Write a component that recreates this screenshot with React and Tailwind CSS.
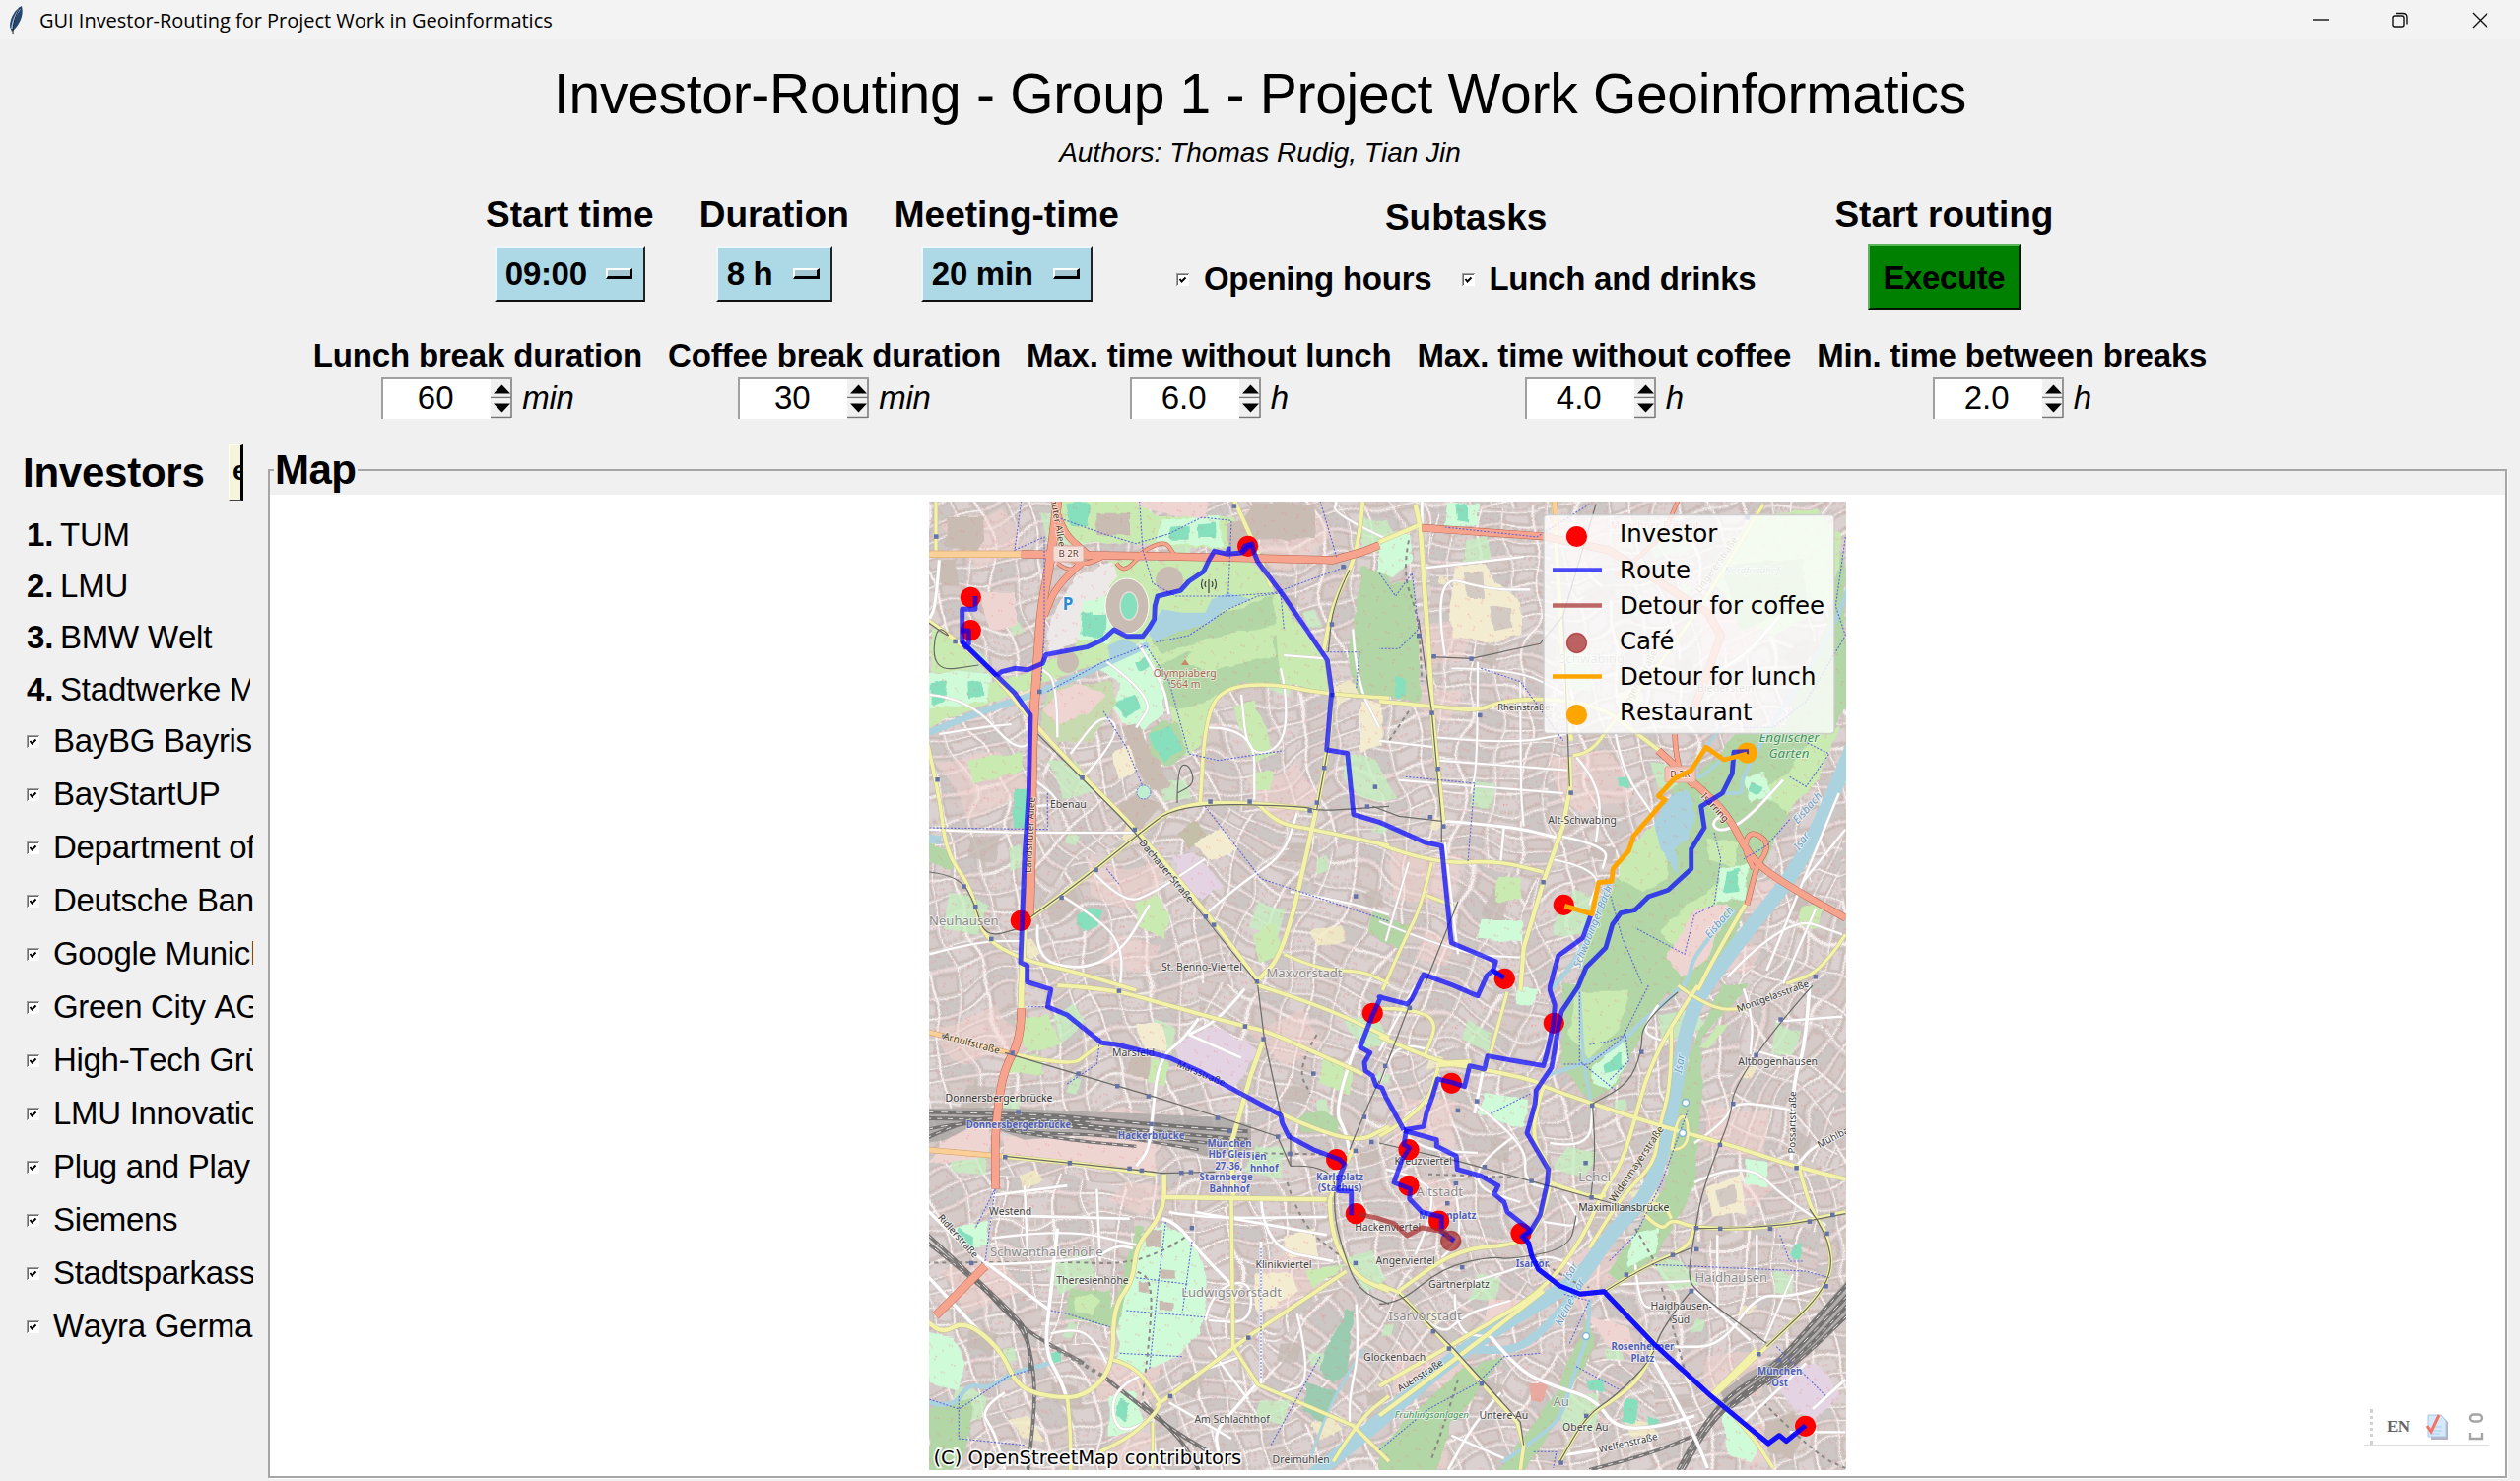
import React from "react";

/* ---------- window chrome ---------- */

function TitleBar() {
  return (
    <div className="flex h-[40px] w-full items-center bg-[#f3f3f3]">
      <svg className="ml-[8px] h-[30px] w-[17px] shrink-0" viewBox="0 0 17 30">
        <path d="M14 1C8 4 2 12 2 22l2 5C10 22 17 12 14 1Z" fill="#27466f" />
        <path d="M12 4C8 9 5 15 4 24" stroke="#8fb4dc" strokeWidth="2" fill="none" />
        <path d="M12 3C8 10 5 18 5 29" stroke="#222" strokeWidth="1" fill="none" />
      </svg>
      <span className="ml-[15px] mt-[2px] whitespace-nowrap font-['Open_Sans','Noto_Sans',sans-serif] text-[20px] leading-[38px] tracking-[-0.02px] text-black">
        GUI Investor-Routing for Project Work in Geoinformatics
      </span>
      <svg className="ml-auto mr-[31px] h-[20px] w-[180px]" viewBox="0 0 180 20" fill="none" stroke="#111" strokeWidth="1.4">
        <path d="M1 10h16" />
        <rect x="82" y="6" width="11" height="11" rx="2" />
        <path d="M85 3.5h7q4 0 4 4v7" />
        <path d="M163 3l15 15M178 3l-15 15" />
      </svg>
    </div>
  );
}

/* ---------- small widgets ---------- */

function CheckBox() {
  return (
    <svg className="h-[13px] w-[13px] shrink-0" viewBox="0 0 13 13">
      <rect width="13" height="13" fill="#fff" />
      <path d="M0 13V0h13v1H1v12z" fill="#a0a0a0" />
      <path d="M1 12V1h11v1H2v10z" fill="#696969" />
      <path d="M3.5 6l2 2.5 4-4" stroke="#000" strokeWidth="2" fill="none" />
    </svg>
  );
}

function OptionMenu({ label, width }) {
  return (
    <div
      className={`flex h-[56px] items-center justify-between border-2 border-t-[#eef8fb] border-l-[#eef8fb] border-r-[#222] border-b-[#111] bg-[#add8e6] pl-[9px] pr-[11px] ${width}`}
    >
      <span className="whitespace-pre text-[33px] font-bold leading-[54px] tracking-[-0.3px]">{label}</span>
      <span className="mt-[-1px] h-[11px] w-[27px] border-t-2 border-l-2 border-r-[3px] border-b-[3px] border-t-white border-l-white border-r-black border-b-black bg-[#a3c8d4]" />
    </div>
  );
}

function Setting({ title, children }) {
  return (
    <div className="flex flex-col items-center">
      <div className="whitespace-nowrap text-[37px] font-bold leading-[42px]">{title}</div>
      {children}
    </div>
  );
}

function Spin({ title, value, unit }) {
  return (
    <div className="flex flex-col items-center">
      <div className="whitespace-nowrap text-[33px] font-bold leading-[38px] tracking-[-0.15px]">{title}</div>
      <div className="mt-[3px] flex h-[42px] items-center">
        <div className="flex h-[42px] w-[133px] border-l-2 border-t-2 border-[#a0a0a0] bg-white">
          <div className="flex-1 pr-[3px] text-center text-[33px] leading-[38px]">{value}</div>
          <svg className="h-[40px] w-[22px]" viewBox="0 0 22 40">
            <rect width="22" height="39" fill="#f0f0f0" />
            <path d="M3 14.500L11.500 5.500L20 14.500Z" fill="#000" />
            <path d="M3 24.500L11.500 33.500L20 24.500Z" fill="#000" />
            <path d="M0 18.500h21M0 38.500h21M21 0v39" stroke="#777" strokeWidth="1.500" />
            <path d="M0 20h20" stroke="#fff" />
          </svg>
        </div>
        <span className="ml-[10px] text-[33px] italic leading-[40px] tracking-[-0.3px]">{unit}</span>
      </div>
    </div>
  );
}

/* ---------- map geometry ----------
   The drawing is authored on four sheets at three times the display scale. */

const ORIGIN = { 1: [940, 505], 2: [1400, 505], 3: [940, 1000], 4: [1400, 1000] };

function pts(sheet, s) {
  const [ox, oy] = ORIGIN[sheet];
  return s
    .trim()
    .split(/\s+/)
    .map((p) => {
      const [x, y] = p.split(",").map(Number);
      return [ox + x / 3, oy + y / 3];
    });
}

function line(...parts) {
  const all = [];
  for (let i = 0; i < parts.length; i += 2) all.push(...pts(parts[i], parts[i + 1]));
  return "M" + all.map((p) => p[0].toFixed(1) + " " + p[1].toFixed(1)).join("L");
}

/* rounds the corners of a polyline */
function curve(...parts) {
  const all = [];
  for (let i = 0; i < parts.length; i += 2) all.push(...pts(parts[i], parts[i + 1]));
  if (all.length < 3) return line(...parts);
  let d = `M${all[0][0]} ${all[0][1]}`;
  for (let i = 1; i < all.length - 1; i++) {
    const mx = (all[i][0] + all[i + 1][0]) / 2;
    const my = (all[i][1] + all[i + 1][1]) / 2;
    d += `Q${all[i][0].toFixed(1)} ${all[i][1].toFixed(1)} ${mx.toFixed(1)} ${my.toFixed(1)}`;
  }
  const e = all[all.length - 1];
  return d + `L${e[0]} ${e[1]}`;
}

const FABRIC = [
  ["url(#g20)", line(1, "850,930 1180,960 1140,1500 1000,1480 640,1030")],
  ["url(#g20)", line(2, "-180,1080 180,1110 480,1160 330,1500 -300,1500")],
  ["url(#g20)", line(3, "830,0 1400,0 1400,420 1280,480 1000,380")],
  ["url(#g20)", line(4, "0,0 500,0 500,240 0,200")],
  ["url(#g5)", line(2, "130,20 500,20 560,800 480,1160 200,1110")],
  ["url(#g0)", line(3, "200,600 640,620 620,880 560,1100 380,1060 200,860")],
  ["url(#g0)", line(3, "740,660 1220,660 1290,870 940,1100 850,1000 850,850")],
  ["url(#g0)", line(4, "980,760 1350,740 1370,920 1170,1100 960,940")],
  ["url(#g60)", line(2, "1100,1500 1420,1000 1420,1500")],
  ["url(#g60)", line(4, "1100,0 1420,0 1420,560 1060,480")],
  ["url(#g45)", line(1, "340,700 620,1000 300,1260")],
  ["url(#g45)", line(3, "940,1120 1300,900 1410,1000 1410,1200 1250,1400 1010,1210")],
  ["url(#g45)", line(4, "0,900 400,850 500,960 100,1160 0,1240")],
  ["url(#g45)", line(4, "350,1100 830,1180 820,1340 420,1320")],
];

const G1 = "#c9ebb2";
const G2 = "#b3d6a6";
const SPORT = "#d0fbd9";
const PITCH = "#86dfbd";
const BLDG = "#c9bcb3";
const WATER = "#aad3df";
const PINK = "#efd5d2";
const LILAC = "#e4d3e3";
const CREAM = "#f4ecd0";

const AREAS = [
  [G1, line(1, "400,10 640,10 700,60 930,60 1000,160 700,140 450,130 400,60")],
  [G1, line(1, "560,195 980,190 1060,280 1210,500 1230,590 1080,560 960,560 870,620 830,760 790,780 720,560 660,480 540,500 350,560 0,700 0,620 300,540 460,460")],
  [G2, line(1, "700,520 800,470 960,460 1080,420 1130,470 1080,560 960,560 850,620 760,640 700,600")],
  [G2, line(1, "800,380 960,340 1060,300 1100,370 960,410 850,430 720,470 690,440")],
  [G1, line(1, "830,450 950,410 1050,420 1060,480 960,500 860,530 790,500")],
  [G1, line(1, "1060,300 1230,510 1210,560 1080,545")],
  [G2, line(1, "1330,210 1410,230 1410,600 1320,600 1290,480")],
  [G1, line(1, "20,400 130,470 130,520 20,530")],
  [SPORT, line(1, "10,540 90,530 200,540 180,620 10,640")],
  [PITCH, line(1, "20,570 60,560 50,620 20,630")],
  [PITCH, line(1, "130,565 170,560 172,600 132,610")],
  ["#eee9e9", line(1, "460,240 560,200 580,240 540,300 500,400 460,440 370,470 385,360")],
  [SPORT, line(1, "480,320 560,300 560,440 470,430")],
  [PITCH, line(1, "480,350 500,350 500,420 475,410")],
  [PITCH, line(1, "505,360 545,360 540,425 500,420")],
  [PITCH, line(1, "430,20 495,20 490,85 440,80")],
  [BLDG, line(1, "520,50 615,50 615,115 520,115")],
  [SPORT, line(1, "720,70 890,60 900,150 700,130")],
  [PITCH, line(1, "750,95 800,90 800,125 745,125")],
  [PITCH, line(1, "830,85 880,80 880,120 832,120")],
  [BLDG, line(1, "1000,20 1180,20 1185,120 1000,125 975,60")],
  [BLDG, line(1, "40,200 90,190 95,260 45,260")],
  [BLDG, line(1, "70,60 170,60 175,130 150,160 60,150")],
  [BLDG, line(1, "920,80 975,75 985,160 925,165")],
  [PINK, line(1, "640,10 860,10 850,60 760,50 660,30")],
  [PINK, line(1, "170,290 270,290 270,390 200,400 180,350")],
  [SPORT, line(1, "530,520 660,440 720,560 720,660 640,720 570,640 600,570")],
  [PITCH, line(1, "640,500 675,480 680,510 650,525")],
  [PITCH, line(1, "575,625 635,600 650,640 610,665")],
  ["#c8dbb0", line(1, "370,580 560,560 580,620 500,740 400,740 350,690")],
  [PINK, line(1, "400,590 470,570 540,600 500,650 400,690 360,650")],
  [BLDG, line(1, "600,700 640,690 700,800 740,880 690,890 640,800")],
  [BLDG, line(1, "585,940 640,905 715,930 650,1010 590,960")],
  [G2, line(1, "680,720 720,680 770,690 790,770 760,810 720,810 690,780")],
  [PITCH, line(1, "682,725 745,695 775,770 722,800")],
  [G1, line(1, "940,640 1000,620 1060,780 1000,800")],
  [G1, line(1, "130,800 290,780 290,830 150,870")],
  [PITCH, line(1, "270,890 310,890 300,1000 270,1000")],
  [G2, line(1, "10,1060 70,1080 80,1130 10,1110")],
  [WATER, line(1, "10,1030 45,1030 45,1055 10,1055")],
  [LILAC, line(1, "750,1100 810,1080 900,1180 840,1225 790,1190")],
  [PITCH, line(1, "465,1270 500,1250 535,1260 520,1300 480,1318 460,1300")],
  [G1, line(1, "640,1240 700,1210 740,1270 720,1340 650,1300")],
  [G1, line(1, "1000,1330 1060,1300 1080,1390 1010,1410")],
  [G2, line(1, "1360,1260 1410,1270 1410,1360 1350,1320")],
  [G1, line(1, "1000,840 1050,835 1050,890 1000,890")],
  ["#c4bfa9", line(1, "770,1020 820,990 850,1030 800,1060")],
  [CREAM, line(1, "820,1050 900,1010 950,1070 870,1100")],
  [CREAM, line(1, "1330,620 1385,630 1385,750 1325,770")],
  [CREAM, line(1, "570,780 620,760 640,830 590,860")],
  [SPORT, line(2, "0,130 90,110 100,190 40,240 0,220")],
  [G2, line(2, "0,270 100,260 120,480 120,620 20,600 0,560")],
  [CREAM, line(2, "235,210 325,205 350,265 430,315 430,410 340,440 230,420 215,330")],
  ["#d3cac4", line(2, "265,230 310,230 315,300 270,300")],
  ["#d3cac4", line(2, "340,330 400,340 400,390 350,400")],
  [PITCH, line(2, "50,550 80,555 80,600 52,605")],
  [SPORT, line(2, "210,20 300,20 300,80 200,90")],
  [PITCH, line(2, "235,25 270,20 270,75 240,70")],
  [G1, line(2, "360,1160 430,1165 425,1225 355,1225")],
  [SPORT, line(2, "310,1290 430,1290 430,1350 300,1340")],
  [G2, line(2, "0,1280 90,1310 60,1370 0,1350")],
  [G1, line(2, "1130,60 1330,40 1400,110 1400,300 1200,420 1100,360 1020,250")],
  [G2, line(2, "1050,210 1290,190 1300,330 1100,400")],
  [G2, line(2, "1410,170 1425,620 1200,1040 1010,1500 600,1500 640,1340 720,1170 860,980 900,880 1040,790 1090,720 1240,700 1360,400")],
  [G1, line(2, "1170,890 1250,840 1310,740 1400,700 1330,860 1240,960")],
  [G1, line(2, "740,1090 860,980 880,1160 800,1200 730,1160")],
  [G1, line(2, "940,1240 1030,1180 1020,1320 920,1380 860,1320")],
  [G1, line(2, "1000,1040 1090,1050 1080,1120 1010,1100")],
  [WATER, line(2, "840,990 890,910 940,890 960,960 940,1040 900,1070 905,1140 860,1070")],
  [SPORT, line(2, "1040,1130 1120,1120 1110,1220 1030,1230")],
  [PITCH, line(2, "1062,1140 1095,1130 1090,1200 1050,1205")],
  [SPORT, line(2, "1110,850 1170,840 1190,910 1130,920")],
  [PITCH, line(2, "1135,870 1165,885 1150,905 1125,895")],
  [PINK, line(2, "880,1400 960,1260 1060,1240 1000,1400 920,1460")],
  [G1, line(2, "1290,1250 1350,1240 1330,1310 1280,1300")],
  [PITCH, line(2, "730,855 755,850 755,880 733,880")],
  [G1, line(3, "270,110 370,90 400,180 310,200")],
  [G1, line(3, "250,220 350,220 350,270 250,260")],
  [PINK, line(3, "10,540 190,520 190,380 120,400")],
  [PINK, line(3, "240,460 700,480 700,570 240,520")],
  [BLDG, line(3, "620,220 680,215 680,280 615,270")],
  [G1, line(3, "690,230 735,235 725,300 680,290")],
  [LILAC, line(3, "750,180 880,130 960,170 1010,200 920,330 800,260")],
  [G2, line(3, "1140,400 1200,385 1260,410 1250,450 1150,440")],
  [G1, line(3, "1210,220 1300,250 1290,330 1200,290")],
  [SPORT, line(3, "660,760 720,725 800,770 845,850 850,950 830,1060 760,1130 660,1175 590,1130 590,980 610,880")],
  [BLDG, line(3, "670,750 710,740 715,790 672,795")],
  [BLDG, line(3, "715,865 755,868 755,890 715,890")],
  [BLDG, line(3, "710,965 752,970 750,985 710,985")],
  [BLDG, line(3, "650,900 680,905 680,935 650,930")],
  [G2, line(3, "640,740 660,740 625,860 600,960 575,1060 565,1000 600,900")],
  [G2, line(3, "440,925 560,930 570,1040 430,1010")],
  [G1, line(3, "455,955 500,940 530,965 500,1000 460,990")],
  [SPORT, line(3, "10,1060 80,1070 120,1150 90,1230 10,1210")],
  [G2, line(3, "10,1290 140,1260 130,1350 100,1475 10,1475")],
  [SPORT, line(3, "90,740 180,720 190,790 130,800")],
  [PITCH, line(3, "100,740 140,770 140,795 95,760")],
  [SPORT, line(3, "560,1250 640,1240 660,1350 560,1370")],
  [PITCH, line(3, "590,1260 620,1270 600,1330 580,1310")],
  [PITCH, line(3, "380,1120 410,1105 405,1140 385,1150")],
  ["#9bcbb0", line(3, "1285,985 1300,990 1280,1180 1240,1210 1205,1170 1230,1080")],
  ["#9bcbb0", line(3, "1165,1210 1250,1240 1210,1330 1150,1290")],
  [CREAM, line(3, "1090,770 1180,740 1190,830 1100,820")],
  [CREAM, line(3, "1000,880 1110,880 1130,930 1010,1000")],
  [CREAM, line(3, "640,120 720,120 730,200 670,190")],
  [G1, line(3, "1160,870 1270,850 1180,920")],
  [G2, line(4, "560,0 880,0 820,110 720,300 640,350 560,240")],
  [G1, line(4, "600,20 760,20 730,130 640,220 580,150")],
  [SPORT, line(4, "650,250 740,170 760,230 700,310 655,300")],
  [PITCH, line(4, "685,240 740,210 740,250 690,265")],
  [G2, line(4, "1050,0 1120,0 980,160 980,330 960,600 900,720 840,820 740,900 700,880 880,600 900,380 960,180")],
  [G1, line(4, "1060,120 1000,190 985,180 1030,130")],
  [SPORT, line(4, "320,330 450,350 440,430 310,390")],
  [SPORT, line(4, "770,760 850,740 840,810 760,860")],
  [SPORT, line(4, "425,10 480,15 460,60 420,50")],
  [G2, line(4, "0,1475 0,1410 240,1180 380,1130 220,1330 170,1475")],
  [G2, line(4, "540,1240 600,1100 640,1010 650,1110 570,1240 520,1360 440,1475 370,1475")],
  [SPORT, line(4, "1120,530 1180,540 1180,610 1120,600")],
  [CREAM, line(4, "1000,620 1100,580 1110,690 1015,700")],
  ["#d3cac4", line(4, "1030,630 1080,615 1085,660 1040,670")],
  [PITCH, line(4, "1260,790 1285,790 1275,830 1255,825")],
  [PITCH, line(4, "640,1210 680,1200 680,1235 645,1230")],
  [PITCH, line(4, "755,1260 785,1270 780,1330 740,1330")],
  [PITCH, line(4, "820,1310 850,1320 845,1345 815,1335")],
  [PITCH, line(4, "1290,1240 1315,1245 1300,1270 1280,1265")],
  [PINK, line(4, "640,1010 760,1040 780,1130 700,1100")],
  [PINK, line(4, "330,960 440,960 430,1020 330,1050")],
  [LILAC, line(4, "1200,1180 1330,1150 1400,1240 1320,1330 1240,1260")],
  [BLDG, line(4, "1180,1340 1260,1300 1290,1370 1260,1440 1190,1420")],
  ["#e8a9a0", line(4, "460,1215 510,1215 500,1260 465,1260")],
  [SPORT, line(4, "1050,1290 1090,1310 1160,1400 1130,1450 1060,1420")],
];

const RIVERS = [
  [44, curve(2, "1440,760 1360,960 1260,1150 1120,1320 1000,1480", 4, "960,60 920,200 880,450 820,640 700,760 620,880 520,950 380,1030 200,1150 0,1330 -200,1490")],
  [24, curve(4, "780,660 690,800 620,900 540,1010 430,1110 300,1110")],
  [12, curve(2, "1425,280 1390,400 1200,680 1100,860 1110,900 1060,900")],
  [13, curve(2, "1080,1260 960,1380 940,1480 900,1500", 4, "900,30 820,90 720,190 620,240 520,270")],
  [10, curve(4, "610,20 620,230 640,330 650,370")],
  [12, curve(4, "640,960 640,1060 600,1160 560,1300 520,1350 380,1450")],
  [20, curve(1, "0,720 140,660 330,600 470,540 670,450")],
  [14, curve(2, "700,1170 660,1300 590,1420 530,1490")],
  [10, curve(2, "1040,700 970,790 960,870 1050,790")],
  [8, curve(3, "1330,1110 1260,1220 1210,1330 1170,1440")],
  [14, curve(3, "10,1270 80,1290 130,1210 190,1230 260,1180 380,1150")],
];

const LAKES = [
  line(1, "685,390 720,340 780,350 850,350 870,310 920,290 990,310 900,345 870,380 760,410 700,440 680,420"),
  line(1, "555,450 600,430 640,445 640,465 560,490"),
];

const DASHES = [
  line(1, "290,10 270,160 360,120 360,420 350,560"),
  line(1, "650,10 660,160 690,260 760,300 920,300 1060,290 1280,210"),
  line(1, "370,590 540,500 670,450 740,560 800,780 890,800 1090,770"),
  line(1, "400,60 540,110 640,140 740,110 840,60 930,70 920,300"),
  line(1, "700,440 800,420 920,340 1010,300 1080,290 1090,400"),
  line(1, "540,650 610,760 660,880"),
  line(1, "10,1005 370,1010 370,900"),
  line(1, "850,940 1020,1160 1410,1290"),
  line(1, "550,1130 590,1180"),
  line(1, "1200,10 1250,180"),
  line(1, "1310,580 1320,470 1210,470"),
  line(2, "0,230 50,300 100,230 120,400 60,460 0,460"),
  line(2, "200,90 480,120 640,20"),
  line(2, "310,520 430,560 560,740"),
  line(2, "80,850 290,870 270,1110"),
  line(2, "1420,120 1390,330 1420,420 1300,620 1200,700 1100,700"),
  line(2, "1020,1020 1040,1100 1020,1240 960,1270 930,1390 780,1310"),
  line(2, "1250,980 1180,1060 1110,1100"),
  line(2, "1250,850 1300,880 1370,780 1290,740"),
  line(2, "690,1160 740,1340 800,1480"),
  line(3, "310,65 370,65"),
  line(3, "180,840 210,620 150,740"),
  line(3, "380,990 430,1000 560,1040"),
  line(3, "730,720 710,880 680,1170"),
  line(3, "640,890 800,910"),
  line(3, "610,990 850,1010"),
  line(3, "590,1120 780,1130"),
  line(3, "810,780 780,1000"),
  line(3, "1020,800 1020,1200"),
  line(3, "10,1260 100,1290 250,1190 320,1170"),
  line(3, "100,1250 100,1380 300,1400"),
  line(3, "1200,1130 1050,1400"),
  line(3, "530,160 520,240 430,300"),
  line(4, "610,20 610,230 720,320"),
  line(4, "820,0 740,160 640,240 560,240"),
  line(4, "640,180 700,170 750,150 760,230 700,290"),
  line(4, "0,1415 150,1290 300,1210 380,1130 490,1120"),
  line(4, "580,1090 640,960 560,940"),
  line(4, "600,1160 730,1230"),
  line(4, "940,380 860,600 780,760 700,840"),
  line(4, "830,850 1300,870 1370,890"),
  line(4, "1220,760 1250,840 1290,840"),
  line(4, "1210,1100 1360,1250"),
  line(4, "340,390 460,330"),
  line(4, "470,1420 540,1420 530,1470"),
];

const W = "w", Y = "y", O = "o", M = "m";
const ROADS = [
  [W, 8, curve(1, "40,190 30,330 10,370")],
  [W, 6, curve(1, "10,600 130,610 280,780 340,720")],
  [W, 5, curve(1, "40,720 160,700 260,690")],
  [W, 6, curve(1, "10,1010 180,1020 640,1020")],
  [W, 6, curve(1, "330,860 430,930 330,940")],
  [W, 6, curve(1, "480,850 600,720 540,650 440,780")],
  [W, 6, curve(1, "400,730 400,560 350,520")],
  [W, 6, curve(1, "500,1130 600,1240 700,1200 850,1100")],
  [W, 6, curve(1, "410,1210 540,1290 600,1380 590,1500")],
  [W, 6, curve(1, "10,1390 160,1350 300,1350")],
  [W, 7, curve(1, "340,1300 330,1400 460,1440 590,1390 680,1240")],
  [W, 6, curve(1, "850,1270 950,1180 1090,1090 1130,960")],
  [W, 6, curve(1, "1110,1200 1280,1230 1410,1270")],
  [W, 6, curve(1, "1090,480 1220,490")],
  [W, 6, curve(1, "1080,520 1100,600 1090,760 980,790 960,600")],
  [W, 6, curve(1, "1300,400 1310,560 1380,700")],
  [W, 6, curve(1, "860,700 1000,700 1000,920")],
  [W, 6, curve(1, "1410,130 1240,50 1250,10")],
  [W, 7, curve(1, "650,450 720,560 740,660")],
  [W, 6, curve(1, "550,500 700,610 640,700")],
  [W, 8, curve(2, "130,10 130,100")],
  [W, 6, curve(2, "130,215 440,180")],
  [W, 6, curve(2, "200,480 160,230 330,280 460,280")],
  [W, 5, curve(2, "220,520 420,520 570,600")],
  [W, 5, curve(2, "170,730 400,750 570,720")],
  [W, 5, curve(2, "180,800 580,830")],
  [W, 5, curve(2, "0,740 170,760")],
  [W, 5, curve(2, "60,860 560,900")],
  [W, 5, curve(2, "300,500 300,800 280,900")],
  [W, 5, curve(2, "430,560 430,880 440,1000")],
  [W, 8, curve(2, "200,985 400,1000 540,1035")],
  [W, 6, curve(2, "200,1050 240,1390")],
  [W, 6, curve(2, "380,1000 370,1110")],
  [W, 6, curve(2, "550,1030 700,1060 680,1130")],
  [W, 5, curve(2, "520,1100 680,1130 640,1240")],
  [W, 6, curve(2, "600,790 680,880 660,1050")],
  [W, 6, curve(2, "720,720 740,830 830,960")],
  [W, 5, curve(2, "0,1290 240,1390 430,1400")],
  [W, 5, curve(2, "90,1110 20,1350")],
  [W, 6, curve(2, "1000,540 1100,500 1220,360")],
  [W, 6, curve(2, "1290,1170 1420,1010")],
  [W, 6, curve(2, "1180,1440 1290,1170 1400,900")],
  [W, 6, curve(2, "1060,1460 1240,1270 1410,1330")],
  [W, 6, curve(2, "1230,1480 1330,1250")],
  [W, 7, curve(2, "1060,960 1010,980 1030,1020 1110,990 1230,860")],
  [W, 8, curve(3, "830,100 790,160 710,220 690,390 680,500 640,550")],
  [W, 8, curve(3, "970,10 900,100 800,150")],
  [W, 9, curve(3, "1310,180 1240,370 1280,450 1290,510")],
  [W, 7, curve(3, "800,150 960,220")],
  [W, 7, curve(3, "430,610 200,640")],
  [W, 7, curve(3, "220,700 620,710")],
  [W, 6, curve(3, "200,770 420,740 640,790")],
  [W, 6, curve(3, "300,610 310,830")],
  [W, 6, curve(3, "520,620 530,840")],
  [W, 9, curve(3, "0,680 100,780 190,850 370,985")],
  [W, 9, curve(3, "0,880 130,1020 180,1070")],
  [W, 10, curve(3, "400,740 380,940 360,1110 410,1200 430,1260")],
  [W, 7, curve(3, "180,850 500,840 580,790 630,800")],
  [W, 6, curve(3, "380,1060 460,1040 520,1090 550,1150")],
  [W, 9, curve(3, "720,710 760,720 840,820 930,910")],
  [W, 7, curve(3, "740,690 840,710 1220,705")],
  [W, 7, curve(3, "820,690 1220,760")],
  [W, 7, curve(3, "1020,780 1020,1220")],
  [W, 7, curve(3, "1020,650 1030,800 1240,840")],
  [W, 9, curve(3, "1010,1210 930,1300 880,1360 890,1420")],
  [W, 6, curve(3, "850,1020 870,930 990,890 990,1030 860,1020")],
  [W, 6, curve(3, "860,1100 980,1260")],
  [W, 7, curve(3, "240,1240 160,1290 210,1360 240,1475")],
  [W, 7, curve(3, "650,1190 560,1230 580,1370 690,1320")],
  [W, 6, curve(3, "1310,970 1320,1110 1290,1250 1290,1330")],
  [W, 6, curve(3, "1130,1000 1180,1210 1080,1240")],
  [W, 6, curve(3, "740,1270 930,1380")],
  [W, 6, curve(3, "820,1180 960,1130")],
  [W, 9, curve(4, "340,1070 420,1170 530,1220 660,1260 720,1350 850,1345 960,1310")],
  [W, 9, curve(4, "830,1130 880,1220 960,1370 1000,1470")],
  [W, 8, curve(4, "560,1430 700,1410 850,1370")],
  [W, 10, curve(4, "1310,0 1300,180 1260,290 1255,530")],
  [W, 8, curve(4, "1420,450 1330,480 1270,550")],
  [W, 6, curve(4, "960,480 1050,420 1080,350 1260,380")],
  [W, 6, curve(4, "1110,10 1140,100 1130,210")],
  [W, 6, curve(4, "1150,200 1290,240")],
  [W, 6, curve(4, "1210,110 1410,95")],
  [W, 6, curve(4, "960,600 1110,530 1240,650 1360,730")],
  [W, 6, curve(4, "730,910 950,900")],
  [W, 6, curve(4, "780,850 790,980 850,980")],
  [W, 7, curve(4, "960,930 1130,1080")],
  [W, 7, curve(4, "1350,920 1250,950 1150,940 1040,1100 900,1100")],
  [W, 6, curve(4, "1030,760 1030,980")],
  [W, 6, curve(4, "1150,760 1150,950")],
  [W, 5, curve(4, "1260,880 1170,1090")],
  [W, 8, curve(4, "1320,1290 1420,1200")],
  [W, 7, curve(4, "1110,1330 1300,1150")],
  [W, 6, curve(4, "1250,1360 1420,1360")],
  [W, 6, curve(4, "230,940 230,1060 340,1070")],
  [W, 6, curve(4, "60,930 180,1080 260,1000 400,960")],
  [W, 7, curve(4, "370,1240 290,1330 210,1475")],
  [W, 6, curve(4, "220,1370 380,1440")],
  [W, 6, curve(4, "600,860 520,810 430,860 290,900")],
  [W, 6, curve(4, "160,200 60,160 0,300")],
  [W, 6, curve(4, "110,0 0,200")],
  [W, 8, curve(4, "320,240 290,390")],
  [W, 6, curve(4, "290,360 450,480 440,600 520,620")],
  [W, 6, curve(4, "410,460 300,540 300,620 430,660")],
  [W, 6, curve(4, "160,350 40,400 120,500 300,510")],
  [W, 6, curve(4, "20,560 160,590 160,700 110,820")],
  [W, 6, curve(4, "230,620 260,760 190,830")],
  [W, 6, curve(4, "520,480 640,500 650,360")],
  [W, 6, curve(4, "560,640 640,740 500,720")],
  [W, 6, curve(4, "850,60 800,130 830,160 880,170")],
  [Y, 9, curve(1, "30,10 30,170")],
  [Y, 11, curve(1, "0,370 90,430 210,540 330,690 480,850 650,1020 860,1270 1010,1470")],
  [Y, 10, curve(1, "0,730 40,900 60,1080 140,1190 170,1340 300,1410 440,1440 640,1500")],
  [Y, 11, curve(1, "1330,10 1320,160 1240,320 1210,470")],
  [Y, 11, curve(1, "940,10 990,120 1020,190 1050,270")],
  [Y, 12, curve(1, "1220,490 1240,600 1220,800 1180,990 1090,1390 1000,1480")],
  [Y, 10, curve(1, "1410,610 1230,600 1050,565 900,580 850,680 835,930")],
  [Y, 12, curve(1, "300,1290 430,1200 640,1030 770,930 1000,930 1180,950")],
  [Y, 10, curve(1, "1010,930 1060,990 1180,1010 1410,1060")],
  [Y, 16, line(1, "300,1290 290,1500")],
  [Y, 16, line(3, "290,0 290,75")],
  [Y, 8, curve(1, "1090,1390 1200,1440 1330,1440 1410,1480")],
  [Y, 13, line(2, "110,20 125,90 150,450 165,700 195,985")],
  [Y, 12, curve(2, "0,135 60,110 130,80")],
  [Y, 12, line(2, "530,0 560,500 585,740")],
  [Y, 12, line(2, "580,790 582,880 560,1000 500,1170 440,1370 430,1500")],
  [Y, 11, curve(2, "0,620 160,635 300,650 370,620 520,610 680,640 760,700 880,790")],
  [Y, 9, curve(2, "590,785 640,780 700,700 860,500 1000,300 1170,20")],
  [Y, 10, curve(2, "0,1055 160,1115 360,1105 500,1140")],
  [Y, 9, curve(2, "160,1110 130,1240 80,1340 10,1500")],
  [Y, 9, curve(2, "140,1210 220,1240")],
  [Y, 11, curve(2, "1120,1230 1020,1400 970,1500")],
  [Y, 9, curve(2, "1420,1330 1350,1440 1240,1480")],
  [Y, 11, curve(3, "400,0 560,10 700,50 970,125 1040,140 1210,215 1330,270")],
  [Y, 10, curve(3, "1010,0 1200,60 1410,160")],
  [Y, 13, line(3, "1030,160 990,270 930,480 935,640")],
  [Y, 10, curve(3, "250,205 440,250 500,200 540,180")],
  [Y, 12, line(3, "230,520 440,540 700,575")],
  [Y, 13, line(3, "725,575 725,645 1220,652")],
  [Y, 12, curve(3, "725,640 720,700 640,790 630,900 570,980 570,1160 500,1240 420,1260 280,1230 230,1110 120,1020 50,1060 0,1020")],
  [Y, 10, curve(3, "570,1140 640,1160 700,1250 720,1280 630,1370 530,1420")],
  [Y, 10, line(3, "930,650 935,1100 1010,1215 1300,1340 1410,1450")],
  [Y, 11, line(3, "700,1280 980,1070 1280,870")],
  [Y, 10, curve(3, "430,1250 440,1350 440,1475")],
  [Y, 8, curve(3, "690,1330 690,1470")],
  [Y, 12, curve(3, "1230,650 1230,760 1310,890 1410,930")],
  [Y, 11, curve(3, "1080,390 1290,490 1410,430")],
  [Y, 11, curve(3, "1230,650 1260,580 1300,500")],
  [Y, 10, curve(3, "1240,1450 1320,1320 1410,1250")],
  [Y, 11, curve(4, "0,155 180,235 290,250 480,290 500,310 860,430 1050,480 1260,550 1420,590")],
  [Y, 9, curve(4, "0,70 90,70 180,105 140,210")],
  [Y, 9, line(4, "390,20 330,240")],
  [Y, 18, line(4, "180,240 280,235")],
  [Y, 10, curve(4, "0,460 140,380 180,250")],
  [Y, 11, curve(4, "500,310 450,450 530,560 500,700 440,790 240,800 60,930")],
  [Y, 10, curve(4, "520,600 640,645 690,640")],
  [Y, 11, curve(4, "970,0 890,120 820,260 780,400 740,540 680,630 620,770 500,930 300,1050 0,1220")],
  [Y, 10, curve(4, "890,130 890,300 850,440 840,540 740,640 640,800")],
  [Y, 12, curve(4, "0,1310 230,1140 500,930")],
  [Y, 10, line(4, "0,910 60,935 230,1120 420,1330 440,1400 430,1475")],
  [Y, 10, curve(4, "690,930 800,860 940,800 960,740")],
  [Y, 10, curve(4, "810,700 860,750 890,710 960,740 1190,740 1420,690")],
  [Y, 9, curve(4, "810,700 810,660 870,670 890,710")],
  [Y, 10, curve(4, "1280,560 1310,680 1370,760 1380,910 1170,1110 1020,1250")],
  [Y, 14, line(4, "1150,1110 1010,1250")],
  [Y, 10, curve(4, "1020,1250 1130,1360 1200,1470")],
  [Y, 10, curve(4, "840,1090 810,1180 720,1260 630,1310 550,1450")],
  [Y, 8, curve(4, "890,500 940,500 940,400 910,400 890,500")],
  [Y, 9, curve(4, "910,0 1010,75 1120,70")],
  [Y, 9, curve(4, "690,930 850,1095")],
  [O, 18, line(1, "0,172 300,172")],
  [O, 12, line(3, "0,140 250,205")],
  [O, 14, line(3, "0,500 230,520")],
  [O, 13, line(2, "533,0 540,100")],
  [M, 12, curve(1, "410,170 470,210 540,180")],
  [M, 17, curve(1, "390,10 410,100 490,170")],
  [M, 21, line(1, "290,172 700,178 1240,190 1330,165 1380,145")],
  [M, 20, line(2, "130,92 500,118 700,160 1000,350 1040,420 960,640")],
  [M, 9, curve(1, "640,180 720,120 760,180")],
  [M, 25, curve(1, "400,10 385,160 350,340 340,500 325,700 320,1100 315,1270")],
  [M, 18, curve(1, "480,195 400,260 360,360")],
  [M, 8, curve(1, "400,200 440,230 470,190 400,180")],
  [M, 9, curve(1, "580,200 600,230 650,180")],
  [M, 22, curve(3, "290,70 290,160 235,260 215,400 210,500 212,620")],
  [M, 22, line(3, "180,855 30,1005")],
  [M, 19, curve(2, "850,770 960,870 1060,960 1130,1100 1240,1180 1420,1280")],
  [M, 13, curve(2, "1150,1120 1200,1060 1130,1010 1110,1070 1140,1130")],
  [M, 14, curve(2, "1155,1110 1140,1160 1120,1240")],
  [M, 13, curve(2, "900,720 905,830 960,880")],
  [M, 9, line(2, "910,10 860,120 720,240")],
];

const TRAM = [
  curve(1, "0,375 90,440 30,380 20,530 160,510"),
  curve(1, "340,720 480,860 650,1030 850,1280 1010,1480"),
  curve(1, "300,1290 430,1200 640,1030 770,930 1160,940 1190,955 1410,940"),
  curve(1, "765,930 765,820 800,810 820,870 765,900"),
  curve(1, "1290,220 1240,320 1225,470"),
  line(1, "1225,760 1190,950"),
  curve(1, "10,1140 100,1150 150,1240 180,1340 290,1310"),
  line(2, "120,370 160,650 190,985 60,970 -20,940"),
  line(2, "160,485 280,490 490,445 560,360 660,20"),
  line(2, "560,360 580,880"),
  line(2, "190,985 190,1050"),
  line(2, "240,1230 140,1480"),
  line(3, "240,205 680,335 890,400 1070,460 1110,550"),
  line(3, "240,520 620,560 720,572 880,568"),
  line(3, "1010,0 1030,160 1080,390"),
  curve(3, "1110,550 1250,545 1240,700 1280,840 1320,930 1410,970"),
  curve(3, "1290,500 1330,400 1380,290"),
  line(3, "1110,450 1110,550"),
  line(4, "0,480 240,535 460,595 640,645 810,690"),
  curve(4, "0,970 60,970 190,860 340,825 400,835 580,800 600,700"),
  curve(4, "650,370 660,500 645,640"),
  curve(4, "910,20 800,110 800,200 760,300 650,360"),
  curve(4, "1320,0 1220,110 1080,310 1070,400 1030,500 980,640 960,760 940,880 960,930 1180,1090"),
  curve(4, "960,740 1190,740 1420,695"),
  curve(4, "1310,680 1370,760 1380,910 1180,1100"),
  curve(4, "690,930 800,860 950,800"),
  curve(4, "950,930 860,1040 830,1140 720,1250 630,1310 550,1450"),
  line(4, "60,940 230,1110 430,1330 440,1400"),
  line(4, "100,40 0,300"),
];

const STATIONS = [
  [1, "30,118 88,437 345,590 475,852 635,1010 517,1133 412,1217 115,1183 150,1245 198,1343 865,925 985,925 1168,952 1190,928 1212,822 1237,600 1235,385 1270,210 938,25 1367,880 1343,940 1308,1213 851,1275 876,1300 1007,1473 34,858"],
  [2, "120,420 166,483 280,490 160,655 306,662 178,825 155,972 195,1000 583,898 499,1170 1120,60 1328,1458"],
  [3, "55,155 262,205 463,268 582,306 677,337 887,403 280,385 685,422 240,522 437,540 619,557 656,563 777,570 806,568 138,845 809,738 743,1250 981,1072 971,124 587,16 1179,268 1027,163 1334,400 1356,476 1307,503 1108,512 1071,460 1307,845 924,443"],
  [4, "92,68 18,245 297,352 239,380 320,552 463,595 628,540 646,645 233,603 207,663 252,858 164,1053 212,1105 311,1212 630,1310 553,1453 752,880 893,820 965,738 1038,740 1190,740 1310,718 1380,698 1363,755 1360,915 950,930 1155,1122 1218,1140 1270,555 1037,485 1077,360 1147,212 1222,103 798,202 648,365 966,803"],
];

/* sheet, x, y, size, colour, text, rotation, weight, style */
const LABELS = [
  [1, 434, 179, 26, "#6b3b30", "B 2R", 0],
  [1, 432, 342, 46, "#2b8cd4", "P", 0, 700],
  [1, 788, 545, 28, "#a8644c", "Olympiaberg", 0],
  [1, 790, 578, 28, "#a8644c", "564 m", 0],
  [1, 433, 944, 28, "#444", "Ebenau", 0],
  [1, 326, 1028, 26, "#5a3a20", "Landshuter Allee", -87],
  [1, 392, 78, 26, "#5a3a20", "huter Allee", 80],
  [1, 724, 1143, 27, "#333", "Dachauer Straße", 50],
  [1, 840, 1440, 28, "#444", "St. Benno-Viertel", 0],
  [1, 115, 1302, 35, "#8a8a8a", "Neuhausen", 0],
  [1, 1152, 1460, 35, "#8a8a8a", "Maxvorstadt", 0],
  [2, 440, 649, 25, "#333", "Rheinstraße", 0],
  [2, 618, 992, 28, "#444", "Alt-Schwabing", 0],
  [2, 647, 503, 35, "#999", "Schwabing", 0],
  [2, 1055, 592, 29, "#777", "Biederstein", 0],
  [2, 1135, 230, 26, "#6f9c86", "Nordfriedhof", 0, 400, "italic"],
  [2, 1035, 210, 26, "#777040", "Ungererstraße", -55],
  [2, 800, 560, 26, "#777040", "Ungererstraße", -62],
  [2, 840, 96, 28, "#d08080", "Münchner Freiheit", 0],
  [2, 916, 851, 26, "#6b3b30", "B 2R", 0],
  [2, 1015, 950, 26, "#6b2a20", "Isarring", 47],
  [2, 1248, 743, 36, "#3f935a", "Englischer", 0, 400, "italic"],
  [2, 1248, 792, 36, "#3f935a", "Garten", 0, 400, "italic"],
  [2, 1312, 952, 30, "#6a9fc6", "Eisbach", -48, 400, "italic"],
  [2, 1295, 1052, 30, "#6a9fc6", "Isar", -55, 400, "italic"],
  [2, 1044, 1300, 30, "#6a9fc6", "Eisbach", -50, 400, "italic"],
  [2, 660, 1310, 29, "#6a9fc6", "Schwabinger Bach", -68, 400, "italic"],
  [3, 136, 186, 27, "#4b3a20", "Arnulfstraße", 15],
  [3, 632, 215, 28, "#444", "Marsfeld", 0],
  [3, 834, 277, 26, "#333", "Marsstraße", 23],
  [3, 222, 355, 28, "#333", "Donnersbergerbrücke", 0],
  [3, 282, 434, 26, "#4f5fb5", "Donnersbergerbrücke", 0, 700],
  [3, 686, 469, 26, "#4f5fb5", "Hackerbrücke", 0, 700],
  [3, 924, 491, 26, "#4f5fb5", "München", 0, 700],
  [3, 924, 525, 26, "#4f5fb5", "Hbf Gleis", 0, 700],
  [3, 1014, 531, 26, "#4f5fb5", "ien", 0, 700],
  [3, 922, 560, 26, "#4f5fb5", "27-36,", 0, 700],
  [3, 1030, 566, 26, "#4f5fb5", "hnhof", 0, 700],
  [3, 914, 595, 26, "#4f5fb5", "Starnberge", 0, 700],
  [3, 924, 629, 26, "#4f5fb5", "Bahnhof", 0, 700],
  [3, 1260, 594, 26, "#4f5fb5", "Karlsplatz", 0, 700],
  [3, 1260, 628, 26, "#4f5fb5", "(Stachus)", 0, 700],
  [3, 257, 699, 28, "#444", "Westend", 0],
  [3, 90, 770, 26, "#333", "Ridlerstraße", 48],
  [3, 367, 824, 35, "#8a8a8a", "Schwanthalerhöhe", 0],
  [3, 507, 910, 28, "#444", "Theresienhöhe", 0],
  [3, 1089, 862, 28, "#444", "Klinikviertel", 0],
  [3, 930, 949, 35, "#8a8a8a", "Ludwigsvorstadt", 0],
  [3, 932, 1333, 28, "#444", "Am Schlachthof", 0],
  [3, 1142, 1454, 28, "#444", "Dreimühlen", 0],
  [4, 26, 746, 28, "#444", "Hackenviertel", 0],
  [4, 80, 850, 28, "#444", "Angerviertel", 0],
  [4, 47, 1143, 28, "#444", "Glockenbach", 0],
  [4, 134, 546, 28, "#444", "Kreuzviertel", 0],
  [4, 184, 643, 35, "#8a8a8a", "Altstadt", 0],
  [4, 208, 712, 26, "#4f5fb5", "Marienplatz", 0, 700],
  [4, 466, 857, 26, "#4f5fb5", "Isartor", 0, 700],
  [4, 243, 921, 28, "#444", "Gärtnerplatz", 0],
  [4, 140, 1020, 35, "#8a8a8a", "Isarvorstadt", 0],
  [4, 130, 1196, 26, "#333", "Auenstraße", -32],
  [4, 160, 1318, 26, "#3f935a", "Frühlingsanlagen", 0, 400, "italic"],
  [4, 379, 1319, 28, "#444", "Untere Au", 0],
  [4, 628, 1357, 28, "#444", "Obere Au", 0],
  [4, 554, 1280, 35, "#8a8a8a", "Au", 0],
  [4, 656, 598, 35, "#8a8a8a", "Lehel", 0],
  [4, 745, 686, 28, "#333", "Maximiliansbrücke", 0],
  [4, 792, 550, 27, "#444020", "Widenmayerstraße", -56],
  [4, 925, 240, 30, "#6a9fc6", "Isar", -80, 400, "italic"],
  [4, 592, 876, 30, "#6a9fc6", "Isar", -60, 400, "italic"],
  [4, 590, 970, 30, "#6a9fc6", "Kleine Isar", -62, 400, "italic"],
  [4, 1214, 242, 28, "#444", "Altbogenhausen", 0],
  [4, 1268, 417, 26, "#333", "Possartstraße", -89],
  [4, 1400, 465, 26, "#333", "Mühlbaur", -27],
  [4, 1202, 42, 26, "#333", "Montgelasstraße", -20],
  [4, 1072, 903, 35, "#8a8a8a", "Haidhausen", 0],
  [4, 920, 988, 28, "#444", "Haidhausen-", 0],
  [4, 918, 1029, 28, "#444", "Süd", 0],
  [4, 802, 1111, 26, "#4f5fb5", "Rosenheimer", 0, 700],
  [4, 802, 1145, 26, "#4f5fb5", "Platz", 0, 700],
  [4, 1220, 1186, 26, "#4f5fb5", "München", 0, 700],
  [4, 1220, 1220, 26, "#4f5fb5", "Ost", 0, 700],
  [4, 760, 1403, 26, "#333", "Welfenstraße", -13],
];

const ROUTES = [
  line(1, "990,142 962,168 920,172 922,156 918,172 878,163 862,190 845,225 800,255 775,283 705,300 697,330 695,370 680,395 660,422 610,422 572,402 540,432 490,455 365,478 355,505 310,524 270,520 230,530 215,542"),
  line(1, "150,300 150,340 110,340 110,440 215,542 270,595 318,662 313,900 300,1100 288,1415 308,1425 308,1475", 3, "380,12 370,65 430,90 535,175 580,180 740,220 840,265 1080,395 1085,420 1105,460 1180,500 1260,530 1275,545 1258,585 1255,625 1295,628 1295,700"),
  line(1, "110,405 130,405 130,445 120,455 112,440 215,542"),
  line(1, "962,165 970,148 992,140 1000,170 1010,195 1090,300 1222,495 1235,590 1220,768 1283,778 1302,965", 2, "0,988 140,1050 190,1060 220,1355 355,1412 347,1440 380,1462"),
  line(2, "380,1462 345,1440 328,1455 300,1517 225,1485 135,1452 100,1525", 4, "85,57 0,35", 3, "1385,35 1360,90 1322,188 1352,205 1335,235 1338,260 1360,275 1370,305 1388,312", 4, "20,340 75,440"),
  line(4, "75,440 135,430 145,385 160,345 178,285 220,295 260,308 275,245 320,255 330,215 500,245 510,210 530,120 535,60 520,15", 2, "520,1490 545,1395 620,1340 645,1270"),
  line(4, "82,445 75,485 92,495 70,530 45,600 95,620 92,650 130,690 190,705 190,750 228,778"),
  line(4, "75,442 175,470 175,490 235,520 238,560 310,580 362,610 350,635 380,660 390,690 460,745 435,765 455,785 465,825 485,865 550,915 612,940 685,932 835,1090 1010,1250 1185,1395 1218,1370 1240,1388 1298,1340"),
  line(4, "1298,1340 1240,1388 1218,1370 1185,1395 1010,1250 835,1090 685,932 612,940 550,915 485,865 465,825 455,785 440,765 460,750 490,700 512,600 515,560 450,450 475,360 478,320 525,250 545,130 555,80 605,5", 2, "630,1430 690,1370 710,1300 735,1265 780,1255 820,1215 880,1195 950,1130 950,1070 990,1005 980,940 1045,900 1075,840 1080,775 1125,773"),
];
const LUNCH = line(2, "565,1243 648,1268 668,1172 708,1168 712,1130 760,1075 775,1030 870,920 850,908 900,855 950,830 995,760 1050,798 1120,780");
const COFFEE = line(4, "-60,697 0,710 45,725 85,762 130,738 200,750 215,775");

const INVESTORS = [
  [1, "980,148 136,304 136,404 289,1288"],
  [2, "382,1465 562,1240"],
  [3, "1360,85 1250,530 1309,695"],
  [4, "532,115 220,298 90,500 90,610 182,717 432,755 1298,1342"],
].flatMap(([k, s]) => pts(k, s));

const CASING = { w: "#d8cfcf", y: "#c4c48c", o: "#cf9d62", m: "#b9604c" };
const FILLS = { w: "#ffffff", y: "#f3f2a8", o: "#fbcf98", m: "#f6a48d" };

function StreetPattern({ id, angle, w, h }) {
  return (
    <pattern id={id} width={w * 2} height={h * 2} patternUnits="userSpaceOnUse" patternTransform={`rotate(${angle})`}>
      <rect width={w * 2} height={h * 2} fill="#dad1d0" />
      <rect x="3" y="3" width={w - 6} height={h - 6} fill="none" stroke="#cbbfbc" strokeWidth="3" />
      <rect x={w + 3} y="3" width={w - 6} height={h - 6} fill="#ccc6c5" stroke="#c9bfbc" strokeWidth="2.500" strokeDasharray="7 1.500" />
      <rect x="3" y={h + 3} width={w - 6} height={h - 6} fill="none" stroke="#cfc3bf" strokeWidth="3" strokeDasharray="5 2" />
      <rect x={w + 3} y={h + 3} width={w - 6} height={h - 6} fill="#d5cac7" stroke="#cabdb9" strokeWidth="2.500" />
      <path d={`M0 0H${w * 2}M0 ${h}H${w}M0 0V${h * 2}M${w} 0V${h * 2}`} stroke="#fbf5f4" strokeWidth="1.700" />
      <path d={`M${w} ${h}H${w * 2}`} stroke="#f3dedd" strokeWidth="1.300" />
      <path d={`M${w + 6} ${h / 2}h6M8 ${h * 1.5}h5`} stroke="#ee9a98" strokeWidth="1" strokeDasharray="1.500 1.500" />
    </pattern>
  );
}

const YARDS = [
  line(3, "0,375 200,372 500,385 700,392 900,402 990,425 990,500 850,520 700,470 500,450 300,470 160,420 60,470 0,480"),
  line(4, "1430,890 1300,1040 1240,1120 1120,1180 1040,1240 1060,1290 1180,1210 1300,1120 1430,1010"),
];
const TRACKS = [
  [9, curve(3, "0,385 330,392 500,405 700,425 980,445")],
  [9, curve(3, "0,405 330,410 500,428 700,445 980,470")],
  [8, curve(3, "200,425 400,420 700,465 980,490")],
  [9, curve(3, "0,465 100,420 200,400 500,415")],
  [7, curve(3, "0,440 120,410 300,450 560,455 830,500")],
  [7, curve(3, "240,440 420,470 640,490")],
  [8, curve(3, "0,755 140,880 280,1040 480,1150")],
  [8, curve(3, "0,780 140,890 300,1040 330,1180 330,1300 310,1475")],
  [7, curve(3, "140,880 280,1010 310,1060 318,1180")],
  [9, curve(3, "540,1190 640,1270 760,1360 860,1420")],
  [8, curve(3, "660,1270 770,1370 830,1475")],
  [9, curve(4, "1430,905 1300,1050 1200,1160 1060,1250 980,1350 910,1475")],
  [9, curve(4, "1430,940 1310,1070 1210,1170 1070,1270 990,1360 925,1475")],
  [8, curve(4, "1430,970 1310,1100 1200,1190 1070,1285")],
  [8, curve(4, "1430,1000 1310,1120 1180,1215")],
  [8, curve(4, "960,1370 850,1420 640,1475")],
];

function Rail() {
  return (
    <g fill="none">
      {YARDS.map((d, i) => (
        <path key={i} d={d + "Z"} fill="#a6a3a1" opacity="0.75" />
      ))}
      {TRACKS.map(([w, d], i) => (
        <g key={i}>
          <path d={d} stroke="#6e6c6b" strokeWidth={w / 2.2} opacity="0.9" />
          <path d={d} stroke="#e6e3e1" strokeWidth="1" strokeDasharray={i % 2 ? "5 6" : "7 8"} />
        </g>
      ))}
      <g stroke="#8a8785" strokeWidth="2" strokeDasharray="4 4">
        <path d={line(3, "360,1085 540,1190")} strokeWidth="4" />
        <path d={curve(3, "0,845 400,840 600,850 720,810 800,760")} />
        <path d={curve(3, "660,1250 690,1000 680,890 640,870")} />
        <path d={line(3, "980,510 1240,515")} />
        <path d={curve(3, "1190,150 1130,250 1170,330")} />
        <path d={curve(3, "1100,600 1140,730 1270,830")} />
        <path d={curve(2, "90,130 70,230 120,360 130,560")} />
        <path d={line(2, "90,650 30,740")} />
        <path d={curve(4, "150,575 420,585")} />
        <path d={curve(4, "240,1200 200,1330 160,1440")} />
        <path d={curve(4, "860,920 900,1060 930,1170")} />
        <path d={curve(4, "470,820 560,890 640,920")} />
        <path d={curve(4, "780,740 850,860")} />
        <path d={curve(4, "1170,1270 1330,1430 1420,1470")} />
      </g>
    </g>
  );
}

function CityMap() {
  return (
    <svg className="block h-[983px] w-[931px] overflow-hidden" viewBox="943 509 931 983">
      <defs>
        <StreetPattern id="gbase" angle={-14} w={27} h={20} />
        <StreetPattern id="g20" angle={20} w={29} h={19} />
        <StreetPattern id="g5" angle={4} w={29} h={17} />
        <StreetPattern id="g0" angle={0} w={29} h={20} />
        <StreetPattern id="g60" angle={-62} w={30} h={18} />
        <StreetPattern id="g45" angle={40} w={28} h={19} />
        <filter id="bend" x="943" y="509" width="931" height="983" filterUnits="userSpaceOnUse">
          <feTurbulence type="fractalNoise" baseFrequency="0.012" numOctaves="2" seed="7" result="n" />
          <feDisplacementMap in="SourceGraphic" in2="n" scale="46" xChannelSelector="R" yChannelSelector="G" />
        </filter>
        <filter id="edge" x="943" y="509" width="931" height="983" filterUnits="userSpaceOnUse">
          <feTurbulence type="fractalNoise" baseFrequency="0.06" numOctaves="2" seed="3" result="n" />
          <feDisplacementMap in="SourceGraphic" in2="n" scale="7" xChannelSelector="R" yChannelSelector="G" />
        </filter>
        <pattern id="scrub" width="34" height="28" patternUnits="userSpaceOnUse" patternTransform="rotate(17)">
          <path d="M2 6h5M19 2v5M28 16h4M9 20l5 4M23 23h3" stroke="#f07c7c" strokeWidth="1" strokeDasharray="1.500 1.500" fill="none" opacity="0.65" />
        </pattern>
        <pattern id="tint" width="310" height="250" patternUnits="userSpaceOnUse">
          <path d="M20 30l60-12 25 40-50 22zM180 120l70 10-12 44-64-12zM200 200l40 6-10 30-40-8z" fill="#f4d3cf" opacity="0.5" />
          <path d="M130 30l30-6 12 26-34 12zM40 160l34 8-8 28-32-6zM250 40l24 4-4 24-22-2zM160 90l12 4-4 10-12-3zM90 120l14-2 3 12-14 3z" fill="#c5efc0" opacity="0.8" />
          <path d="M100 200l18-7 9 15-20 9zM220 80l12 3-4 10-11-3z" fill="#f4ecc6" opacity="0.85" />
          <path d="M60 100l24 6-6 20-24-6zM270 150l20 4-6 24-18-6zM140 160l20-4 4 16-20 4z" fill="#c5bab4" opacity="0.8" />
        </pattern>
      </defs>
      <g filter="url(#bend)">
        <rect x="900" y="460" width="1020" height="1080" fill="url(#gbase)" />
        {FABRIC.map(([f, d], i) => (
          <path key={i} d={d + "Z"} fill={f} />
        ))}
        <rect x="900" y="460" width="1020" height="1080" fill="url(#tint)" />
      </g>
      <g filter="url(#edge)">
        {AREAS.map(([f, d], i) => (
          <path key={i} d={d + "Z"} fill={f} stroke={f} strokeWidth="2" strokeLinejoin="round" />
        ))}
      </g>
      <rect x="943" y="509" width="931" height="983" fill="url(#scrub)" />
      <g fill="none" stroke={WATER} strokeLinecap="round">
        {RIVERS.map(([w, d], i) => (
          <path key={i} d={d} strokeWidth={w / 3} />
        ))}
      </g>
      {LAKES.map((d, i) => (
        <path key={i} d={d + "Z"} fill={WATER} />
      ))}
      <Rail />
      <ellipse cx="1144" cy="615" rx="22" ry="28" fill={BLDG} stroke="#fff" strokeWidth="1" />
      <ellipse cx="1146" cy="615" rx="9" ry="14" fill={PITCH} stroke="#e5ddd8" strokeWidth="1.500" />
      <circle cx="1187" cy="589" r="14" fill={BLDG} />
      <circle cx="1084" cy="672" r="11" fill={BLDG} />
      <circle cx="1161" cy="804" r="7" fill="#bfeed0" stroke="#6a7fd0" strokeDasharray="2 1" />
      {["w", "y", "o", "m"].map((kind) => (
        <g key={kind} fill="none" strokeLinejoin="round">
          {ROADS.filter((r) => r[0] === kind).map((r, i) => (
            <path key={"c" + i} d={r[2]} stroke={CASING[kind]} strokeWidth={r[1] / 3 + 1.2} />
          ))}
          {ROADS.filter((r) => r[0] === kind).map((r, i) => (
            <path key={"f" + i} d={r[2]} stroke={FILLS[kind]} strokeWidth={r[1] / 3 + 0.2} />
          ))}
        </g>
      ))}
      <g fill="none" stroke="#5d66d8" strokeWidth="1.100" strokeDasharray="2 1.600">
        {DASHES.map((d, i) => (
          <path key={i} d={d} />
        ))}
      </g>
      <g fill="none" stroke="#6b6b66" strokeWidth="1.200">
        {TRAM.map((d, i) => (
          <path key={i} d={d} />
        ))}
      </g>
      {STATIONS.flatMap(([k, s]) => pts(k, s)).map(([x, y], i) => (
        <rect key={i} x={x - 2} y={y - 2} width="4.500" height="4.500" fill="#6472a8" />
      ))}
      <rect x="1069" y="554" width="31" height="16" rx="2" fill="#f4dcd6" stroke="#dfa898" />
      <rect x="1690" y="778" width="31" height="16" rx="2" fill="#f4c3b8" stroke="#dfa898" />
      <path d="M1203 669l-4 6h8z" fill="#c88868" />
      <g stroke="#444" strokeWidth="1.200" fill="none">
        <path d="M1227 588v14M1224 590q-2 3 0 6M1230 590q2 3 0 6M1221 588q-3 5 0 10M1233 588q3 5 0 10" />
      </g>
      <g fill="#fff" stroke="#7fb5dc" strokeWidth="1.500">
        <circle cx="1711" cy="1119" r="3.500" />
        <circle cx="1708" cy="1150" r="3.500" />
        <circle cx="1610" cy="1356" r="3.500" />
      </g>

      <g fontFamily="'Noto Sans', sans-serif" textAnchor="middle">
        {LABELS.map(([k, x, y, size, color, text, rot, weight, style], i) => {
          const [[px, py]] = pts(k, `${x},${y}`);
          return (
            <text
              key={i}
              x={px}
              y={py}
              fontSize={size / 2.68}
              fill={color}
              fontWeight={weight || 400}
              fontStyle={style || "normal"}
              transform={rot ? `rotate(${rot} ${px} ${py})` : undefined}
              stroke="#ffffff"
              strokeOpacity="0.6"
              strokeWidth="1.800"
              paintOrder="stroke"
            >
              {text}
            </text>
          );
        })}
      </g>

      {INVESTORS.map(([x, y], i) => (
        <circle key={i} cx={x} cy={y} r="10.600" fill="#ff0000" />
      ))}
      <circle cx="1773.500" cy="764" r="10.600" fill="#ffa500" />
      <circle cx="1472.700" cy="1259.300" r="10" fill="#a52a2a" fillOpacity="0.720" stroke="#a52a2a" strokeOpacity="0.700" strokeWidth="1.300" />
      <g fill="none" strokeWidth="4.900" strokeLinejoin="round" strokeOpacity="0.7">
        {ROUTES.map((d, i) => (
          <path key={i} d={d} stroke="#0000ff" />
        ))}
        <path d={COFFEE} stroke="#a52a2a" />
        <path d={LUNCH} stroke="#ffa500" strokeOpacity="1" />
      </g>

      <g>
        <rect x="1567" y="522.500" width="295" height="222" rx="4" fill="#fff" fillOpacity="0.8" stroke="#ccc" strokeOpacity="0.9" strokeWidth="1.500" />
        <circle cx="1600.500" cy="544.500" r="10.600" fill="#ff0000" />
        <path d="M1576 578.500h50" stroke="#0000ff" strokeOpacity="0.7" strokeWidth="4.700" />
        <path d="M1576 614.500h50" stroke="#a52a2a" strokeOpacity="0.7" strokeWidth="4.700" />
        <circle cx="1600.500" cy="652.500" r="10" fill="#a52a2a" fillOpacity="0.720" stroke="#a52a2a" strokeOpacity="0.700" strokeWidth="1.300" />
        <path d="M1576 686.500h50" stroke="#ffa500" strokeWidth="4.700" />
        <circle cx="1600.500" cy="725.500" r="10.600" fill="#ffa500" />
        <g fontFamily="'DejaVu Sans', sans-serif" fontSize="24.400" fill="#000">
          <text x="1644" y="550">Investor</text>
          <text x="1644" y="587">Route</text>
          <text x="1644" y="623">Detour for coffee</text>
          <text x="1644" y="659">Café</text>
          <text x="1644" y="695">Detour for lunch</text>
          <text x="1644" y="731">Restaurant</text>
        </g>
      </g>
      <text x="947.500" y="1486" fontFamily="'DejaVu Sans', sans-serif" fontSize="19.500" fill="#000" stroke="#fff" strokeWidth="3.500" strokeOpacity="0.9" paintOrder="stroke">
        (C) OpenStreetMap contributors
      </text>
    </svg>
  );
}

/* ---------- input-language bar ---------- */

function LanguageBar() {
  return (
    <div className="absolute right-[16px] bottom-[31px] flex h-[38px] w-[127px] items-center border-b border-[#dcdcdc]">
      <div className="ml-[6px] h-[36px] border-l-[3px] border-dotted border-[#d2d2d2]" />
      <span className="ml-[14px] font-['Liberation_Serif',serif] text-[17px] font-bold leading-[20px] tracking-[-0.5px] text-[#666]">EN</span>
      <svg className="ml-[16px] h-[28px] w-[24px]" viewBox="0 0 24 28">
        <path d="M6 5h13l4 4v18H6z" fill="#b4b4c4" />
        <path d="M3 2h13l5 6v16H3z" fill="#d6e9fb" stroke="#a8c8e8" />
        <path d="M7 14h10M7 18h10M7 21h8" stroke="#a9cdf0" />
        <path d="M2 13l4 6 8-17" stroke="#f27464" strokeWidth="3" fill="none" />
      </svg>
      <svg className="ml-[19px] h-[28px] w-[16px]" viewBox="0 0 16 28" fill="none" stroke="#a5a5a5" strokeWidth="2.4">
        <rect x="2" y="1.500" width="12" height="7" rx="3.500" />
        <path d="M2 20v6h12v-6" />
      </svg>
    </div>
  );
}

/* ---------- side list ---------- */

const FIXED = ["TUM", "LMU", "BMW Welt", "Stadtwerke München"];
const OPTIONAL = [
  "BayBG Bayrische", "BayStartUP", "Department of", "Deutsche Bank", "Google Munich", "Green City AG",
  "High-Tech Gründer", "LMU Innovation", "Plug and Play", "Siemens", "Stadtsparkasse", "Wayra Germany",
];

function Investors() {
  return (
    <aside className="w-[272px] shrink-0">
      <div className="flex h-[71px] pl-[23px]">
        <h2 className="w-[209px] pt-[5px] text-[42px] font-bold leading-[48px] tracking-[-0.25px]">Investors</h2>
        <div className="h-[57px] w-[15px] overflow-hidden border-y border-l border-r-[3px] border-t-[#fffff4] border-l-[#fffff4] border-r-black border-b-[#444] bg-[#f5f5dc] pl-[3px] text-[27px] font-bold leading-[52px]">
          e
        </div>
      </div>
      <ul className="h-[203px]">
        {FIXED.map((name, i) => (
          <li key={name} className="flex h-[52.2px] w-[254px] overflow-hidden whitespace-nowrap pl-[27px] text-[33px] leading-[42px]">
            <b className="w-[34px] shrink-0">{i + 1}.</b>
            <span className="tracking-[-0.2px]">{name}</span>
          </li>
        ))}
      </ul>
      <ul>
        {OPTIONAL.map((name) => (
          <li key={name} className="flex h-[54px] w-[257px] items-center overflow-hidden whitespace-nowrap pl-[27px] text-[33px] leading-[54px]">
            <CheckBox />
            <span className="ml-[14px] tracking-[-0.3px]">{name}</span>
          </li>
        ))}
      </ul>
    </aside>
  );
}

export default function App() {
  return (
    <div className="flex h-[1503px] w-[2558px] flex-col overflow-hidden bg-[#f0f0f0] font-['Liberation_Sans',Arial,sans-serif] text-black [font-kerning:none]">
      <TitleBar />
      <header className="flex h-[411px] shrink-0 flex-col items-center">
        <h1 className="mt-[23px] whitespace-nowrap text-[57px] leading-[64px] tracking-[-0.3px]">
          Investor-Routing - Group 1 - Project Work Geoinformatics
        </h1>
        <p className="mt-[12px] whitespace-nowrap text-[28px] italic leading-[32px]">Authors: Thomas Rudig, Tian Jin</p>

        <div className="mt-[26px] flex h-[130px] w-full items-start pl-[493px]">
          <div className="flex gap-[46px]">
            <Setting title="Start time">
              <div className="mt-[11px]"><OptionMenu label="09:00" width="w-[153px]" /></div>
            </Setting>
            <Setting title="Duration">
              <div className="mt-[11px]"><OptionMenu label="8 h" width="w-[118px]" /></div>
            </Setting>
            <Setting title="Meeting-time">
              <div className="mt-[11px]"><OptionMenu label="20 min" width="w-[174px]" /></div>
            </Setting>
          </div>
          <div className="ml-[58px] mt-[3px]">
            <Setting title="Subtasks">
              <div className="mt-[20px] flex items-center whitespace-nowrap text-[33px] font-bold leading-[42px] tracking-[-0.25px]">
                <CheckBox />
                <span className="ml-[15px]">Opening hours</span>
                <span className="w-[31px]" />
                <CheckBox />
                <span className="ml-[14px]">Lunch and drinks</span>
              </div>
            </Setting>
          </div>
          <div className="ml-[80px]">
            <Setting title="Start routing">
              <div className="mt-[9px] h-[67px] w-[155px] border-2 border-t-[#5ab65a] border-l-[#5ab65a] border-r-[#001500] border-b-[#001500] bg-[#008000] text-center text-[33px] font-bold leading-[63px] tracking-[-0.4px]">
                Execute
              </div>
            </Setting>
          </div>
        </div>

        <div className="mt-[15px] flex gap-[26px]">
          <Spin title="Lunch break duration" value="60" unit="min" />
          <Spin title="Coffee break duration" value="30" unit="min" />
          <Spin title="Max. time without lunch" value="6.0" unit="h" />
          <Spin title="Max. time without coffee" value="4.0" unit="h" />
          <Spin title="Min. time between breaks" value="2.0" unit="h" />
        </div>
      </header>

      <main className="flex min-h-0 flex-1">
        <Investors />
        <section className="relative mt-[25px] mb-[3px] flex w-[2273px] flex-col border-2 border-[#a6a6a6] shadow-[1px_1px_0_#fff]">
          <h2 className="absolute left-[4px] top-[-25px] bg-[#f0f0f0] px-[1px] text-[42px] font-bold leading-[48px] tracking-[-0.5px]">Map</h2>
          <div className="h-[24px] shrink-0" />
          <div className="flex flex-1 justify-center bg-white pt-[7px]">
            <CityMap />
          </div>
          <LanguageBar />
        </section>
      </main>
    </div>
  );
}
